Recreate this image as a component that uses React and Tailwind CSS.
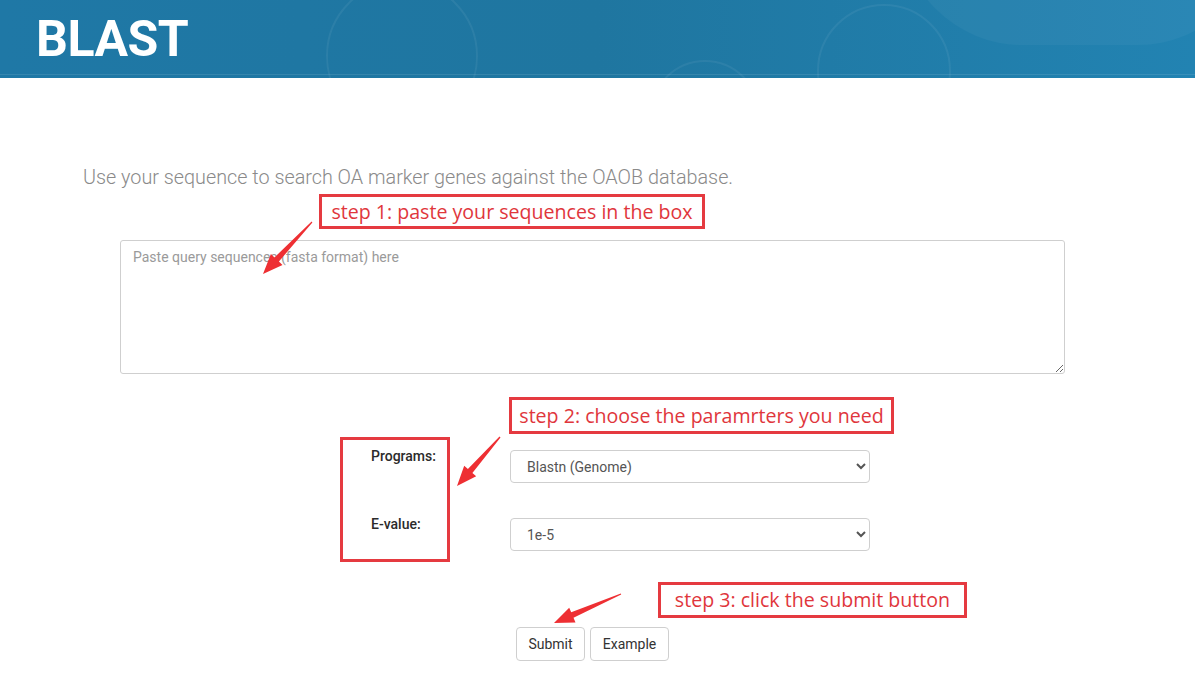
import React from 'react';

// tapered annotation arrow, tail -> tip
const arrowPoints = (tx, ty, px, py) => {
  const dx = px - tx;
  const dy = py - ty;
  const len = Math.hypot(dx, dy);
  const ux = dx / len;
  const uy = dy / len;
  const nx = -uy;
  const ny = ux;
  const head = 20;
  const bx = px - ux * head;
  const by = py - uy * head;
  const pts = [
    [tx + nx * 0.6, ty + ny * 0.6],
    [bx + nx * 3, by + ny * 3],
    [bx + nx * 8, by + ny * 8],
    [px, py],
    [bx - nx * 8, by - ny * 8],
    [bx - nx * 3, by - ny * 3],
    [tx - nx * 0.6, ty - ny * 0.6],
  ];
  return pts.map((p) => p.map((v) => v.toFixed(1)).join(',')).join(' ');
};

const arrows = [
  [312, 222, 263, 274],
  [500, 437, 457, 486],
  [621, 594, 554, 623],
];

const Note = ({ className, children }) => (
  <div
    className={`absolute border-[3px] border-[#e53a40] bg-white flex items-center justify-center text-[#e0363c] text-[19.6px] font-medium font-['Open_Sans',sans-serif] ${className}`}
  >
    {children}
  </div>
);

const Field = ({ label, children }) => (
  <div className="flex items-start">
    <label className="w-[139px] text-[14px] leading-[20px] font-medium text-[#2b2b2b]">{label}</label>
    <select className="mt-[4px] w-[360px] h-[33px] border border-[#cfcfcf] rounded-[4px] pl-[12px] pr-[8px] text-[14px] text-[#555] bg-white">
      {children}
    </select>
  </div>
);

const App = () => {
  return (
    <div className="relative min-h-screen bg-white font-['Roboto',sans-serif] overflow-hidden">
      <header className="relative h-[78px] overflow-hidden bg-gradient-to-r from-[#1f78a6] via-[#1f76a0] to-[#2283b2]">
        <div className="absolute left-[326px] top-[-20px] w-[152px] h-[152px] rounded-full border-2 border-white/[0.06]"></div>
        <div className="absolute left-[817px] top-[4px] w-[134px] h-[134px] rounded-full border-2 border-white/[0.06]"></div>
        <div className="absolute left-[650px] top-[60px] w-[110px] h-[110px] rounded-full border-2 border-white/[0.06]"></div>
        <div className="absolute left-[900px] top-[-200px] w-[360px] h-[245px] rounded-full bg-white/[0.035]"></div>
        <div className="absolute left-0 right-0 bottom-[3px] h-px bg-white/10"></div>
        <h1 className="relative pl-[36px] pt-[9px] text-[50px] leading-[60px] font-bold text-white tracking-[-0.5px]">
          BLAST
        </h1>
      </header>

      <main className="pb-10">
        <p className="ml-[83px] mt-[86px] text-[19.8px] leading-[28px] font-light text-[#8a8a8a]">
          Use your sequence to search OA marker genes against the OAOB database.
        </p>

        <textarea
          placeholder="Paste query sequences (fasta format) here"
          className="block ml-[120px] mt-[48px] w-[945px] h-[134px] border border-[#cfcfcf] rounded-[3px] px-[12px] py-[6px] text-[14px] leading-[20px] text-[#555] placeholder:text-[#9a9a9a] outline-none"
        ></textarea>

        <div className="ml-[371px] mt-[72px] flex flex-col gap-[31px]">
          <Field label="Programs:">
            <option>Blastn (Genome)</option>
            <option>Blastp (Protein)</option>
          </Field>
          <Field label="E-value:">
            <option>1e-5</option>
            <option>1e-10</option>
          </Field>
        </div>

        <div className="ml-[516px] mt-[76px] flex gap-[5px]">
          <button className="h-[34px] w-[69px] border border-[#cfcfcf] rounded-[4px] text-[14px] text-[#333] bg-white">Submit</button>
          <button className="h-[34px] w-[79px] border border-[#cfcfcf] rounded-[4px] text-[14px] text-[#333] bg-white">Example</button>
        </div>
      </main>

      <Note className="left-[319px] top-[194px] w-[386px] h-[35px]">step 1: paste your sequences in the box</Note>
      <Note className="left-[509px] top-[397px] w-[385px] h-[37px]">step 2: choose the paramrters you need</Note>
      <div className="absolute left-[340px] top-[437px] w-[110px] h-[125px] border-[3px] border-[#e53a40]"></div>
      <Note className="left-[658px] top-[582px] w-[309px] h-[36px]">step 3: click the submit button</Note>

      <svg className="absolute inset-0 w-full h-full pointer-events-none" width="1195" height="693">
        {arrows.map((a, i) => (
          <polygon key={i} points={arrowPoints(...a)} fill="#ee2f33" />
        ))}
      </svg>
    </div>
  );
};

export default App;
